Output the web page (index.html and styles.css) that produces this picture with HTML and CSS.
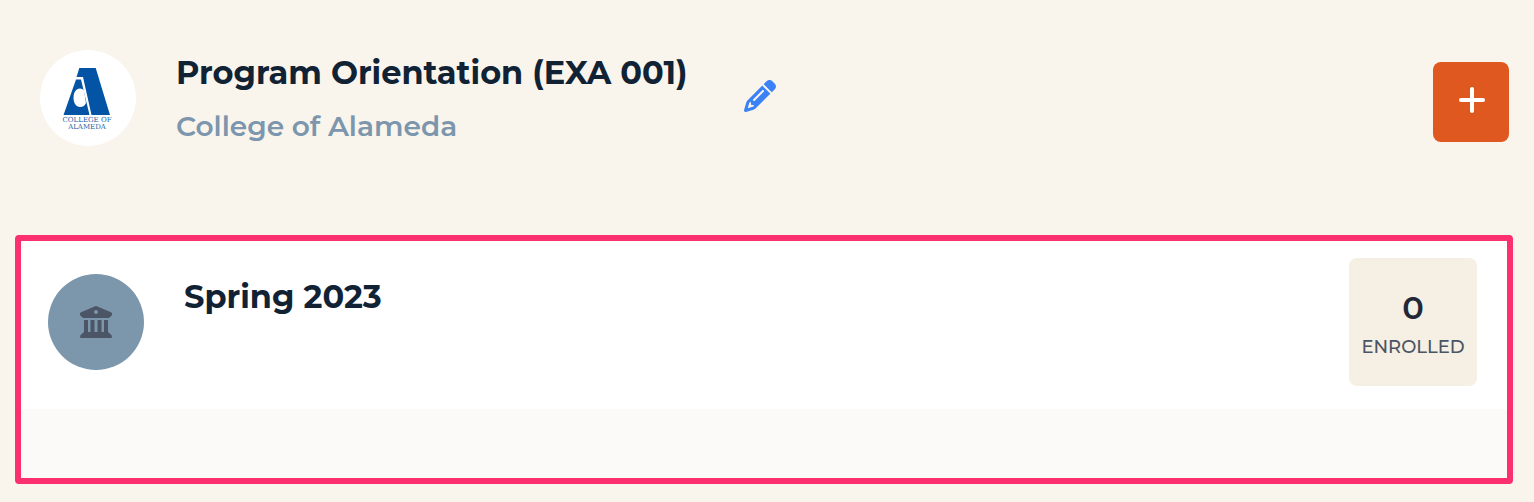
FILE: index.html
```html
<!DOCTYPE html>
<html lang="en">
<head>
<meta charset="utf-8">
<title>Program Orientation (EXA 001)</title>
<link rel="stylesheet" href="styles.css">
</head>
<body>
<header class="course">
  <div class="avatar avatar-logo">
    <svg class="college-logo" viewBox="0 0 96 96" role="img" aria-label="College of Alameda">
      <path fill="#0354a4" d="M39.300 18H55.700L70 65H51.500L43 27H36.500Z"/>
      <path fill="#0354a4" d="M36 29.500H41L49.500 65H23.500Z"/>
      <path fill="#fff" d="M44 40.500C43 39.200 41.500 38.500 40 38.500C36 38.500 33.500 42.500 33.500 47.700S36 57 40 57C42.500 57 44.500 56 46 53Z"/>
      <text class="logo-text" x="47" y="72" text-anchor="middle">COLLEGE OF</text>
      <text class="logo-text" x="47" y="79" text-anchor="middle">ALAMEDA</text>
    </svg>
  </div>
  <div class="course-text">
    <h1 class="title">Program Orientation (EXA 001)</h1>
    <p class="college">College of Alameda</p>
  </div>
  <button class="edit" type="button" aria-label="Edit">
    <svg class="icon" viewBox="0 0 512 512"><path fill="currentColor" d="M410.3 231l11.300-11.300-33.900-33.900-62.100-62.100L291.700 89.800l-11.300 11.300-22.600 22.600L58.600 322.900c-10.400 10.400-18 23.300-22.200 37.400L1 480.700c-2.500 8.400-.2 17.500 6.100 23.700s15.300 8.500 23.700 6.100l120.300-35.400c14.100-4.200 27-11.800 37.400-22.200L387.700 253.700 410.300 231zM160 399.400l-9.100 22.700c-4 3.100-8.500 5.400-13.300 6.900L59.400 452l23-78.100c1.400-4.900 3.800-9.400 6.900-13.300l22.700-9.100v32c0 8.800 7.200 16 16 16h32zM362.700 18.700L348.300 33.200 325.700 55.800 314.300 67.100l33.900 33.900 62.100 62.100 33.900 33.900 11.300-11.300 22.600-22.600 14.500-14.500c25-25 25-65.500 0-90.500L453.300 18.700c-25-25-65.500-25-90.500 0zm-47.400 168l-144 144c-6.200 6.200-16.400 6.200-22.600 0s-6.200-16.400 0-22.600l144-144c6.200-6.200 16.400-6.200 22.600 0s6.200 16.400 0 22.600z"/></svg>
  </button>
  <button class="add" type="button" aria-label="Add term">
    <svg class="icon" viewBox="0 0 32 32"><path d="M17 5V27M6 16H28" fill="none" stroke="currentColor" stroke-width="4" stroke-linecap="round"/></svg>
  </button>
</header>
<main class="terms">
  <section class="term">
    <div class="avatar avatar-term">
      <svg class="icon" viewBox="0 0 32 32" aria-hidden="true">
        <path fill="currentColor" fill-rule="evenodd" d="M15.200.2Q16-.1 16.800.2L31 6.200Q32 6.700 32 7.700V9Q32 10 31 10L29 12H3L1 10Q0 10 0 9V7.700Q0 6.700 1 6.200ZM16 4A2 2 0 1 0 16 8A2 2 0 1 0 16 4Z"/>
        <path fill="currentColor" d="M4 14H8V26H10.500V14H14.500V26H17.500V14H21.500V26H24V14H28V26L31.300 29Q32 29.600 32 30.500Q32 32 30.500 32H1.500Q0 32 0 30.500Q0 29.600.7 29L4 26Z"/>
      </svg>
    </div>
    <h2 class="title term-title">Spring 2023</h2>
    <div class="stat">
      <span class="stat-value">0</span>
      <span class="stat-label">ENROLLED</span>
    </div>
  </section>
  <div class="term-footer"></div>
</main>
</body>
</html>
```
FILE: styles.css
```css
* { box-sizing: border-box; }
body {
  margin: 0;
  background: #f9f4ec;
  color: #102233;
  font-family: Montserrat, Inter, "Open Sans", sans-serif;
}
.course {
  display: flex;
  align-items: flex-start;
  padding: 50px 25px 89px 40px;
}
.avatar {
  display: flex;
  flex: none;
  align-items: center;
  justify-content: center;
  width: 96px;
  height: 96px;
  border-radius: 50%;
}
.avatar-logo { background: #fff; }
.college-logo { width: 96px; height: 96px; }
.logo-text {
  fill: #2864a4;
  font-family: "DejaVu Serif", serif;
  font-size: 7px;
}
.course-text { margin-left: 40px; }
.title {
  margin: 0;
  font-size: 32px;
  font-weight: 700;
  line-height: 46px;
}
.college {
  margin: 10px 0 0;
  color: #7b96ad;
  font-size: 28px;
  font-weight: 600;
  line-height: 40px;
}
.edit, .add {
  display: flex;
  align-items: center;
  justify-content: center;
  padding: 0;
  border: 0;
  cursor: pointer;
}
.edit {
  margin: 30px 0 0 56px;
  background: none;
  color: #3b82f6;
}
.icon { display: block; width: 32px; height: 32px; }
.add {
  width: 76px;
  height: 80px;
  margin: 12px 0 0 auto;
  padding-bottom: 4px;
  border-radius: 8px;
  background: #df5820;
  color: #fff;
}
.terms {
  margin: 0 21px 18px 15px;
  border: 6px solid #fd306f;
  border-radius: 4px;
  background: #fff;
}
.term {
  display: flex;
  align-items: flex-start;
  padding: 17px 30px 23px 27px;
}
.avatar-term {
  margin-top: 16px;
  background: #7c96ac;
  color: #4b5566;
}
.term-title { margin: 16px 0 0 40px; }
.stat {
  display: flex;
  flex-direction: column;
  align-items: center;
  justify-content: center;
  width: 128px;
  height: 128px;
  margin-left: auto;
  border-radius: 8px;
  background: #f6efe3;
}
.stat-value {
  color: #1f2937;
  font-size: 32px;
  font-weight: 600;
  line-height: 50px;
}
.stat-label {
  color: #4b5563;
  font-size: 18px;
  font-weight: 500;
  line-height: 28px;
}
.term-footer { height: 69px; background: #fbfaf8; }
```
